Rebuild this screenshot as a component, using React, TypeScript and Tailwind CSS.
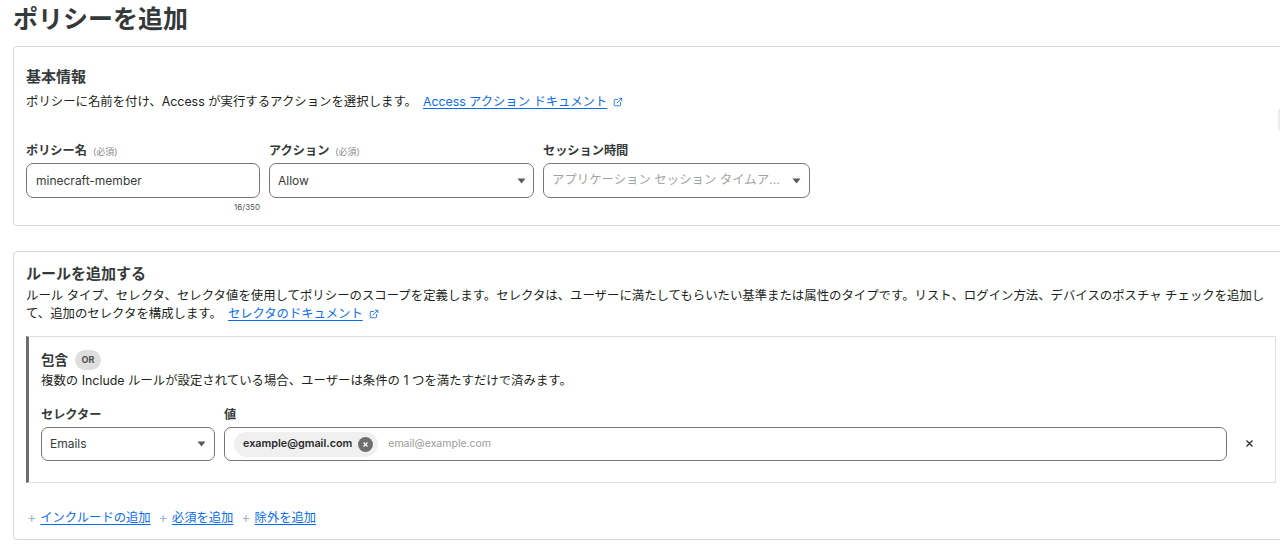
import { ExternalLink } from "lucide-react";

const font = "font-['Inter','Noto_Sans_CJK_JP',sans-serif]";

function Caret() {
  return (
    <svg width="9" height="6" viewBox="0 0 9 6" className="shrink-0">
      <path d="M0.5 0.5h8L4.5 5.5z" fill="#595959" />
    </svg>
  );
}

function Required() {
  return <span className="ml-[6px] text-[9px] font-normal text-[#8a8a8a]">(必須)</span>;
}

function DocLink({ children }: { children: string }) {
  return (
    <span className="inline-flex items-center gap-[6px] text-[12.3px] text-[#0a6cf0]">
      <span className="underline underline-offset-2">{children}</span>
      <ExternalLink className="h-[10px] w-[10px]" strokeWidth={2} />
    </span>
  );
}

function Field({ label, children, required, className }: { label: string; children: React.ReactNode; required?: boolean; className: string }) {
  return (
    <div className={className}>
      <div className="mb-[3px] h-[18px] text-[12.2px] font-semibold leading-[18px] text-[#36393a]">
        {label}
        {required && <Required />}
      </div>
      {children}
    </div>
  );
}

const boxClass = "flex items-center rounded-[7px] border border-[#72777a] bg-white text-[#36393a]";

function AddLink({ children }: { children: string }) {
  return (
    <span>
      <span className="mr-[4px] text-[14px] text-[#9db5d3]">+</span>
      <span className="underline underline-offset-2">{children}</span>
    </span>
  );
}

export default function App() {
  return (
    <div className={`${font} relative h-[544px] w-[1280px] overflow-hidden bg-white text-[#1d1f20]`}>
      <h1 className="ml-[13px] pt-[3px] text-[25px] font-semibold leading-[32px] text-[#36393a]">ポリシーを追加</h1>

      <section className="ml-[13px] mt-[11px] h-[180px] w-[1300px] rounded-[4px] border border-[#d9d9d9] px-[12px] pt-[19px]">
        <h2 className="text-[15px] font-semibold leading-[22px] text-[#36393a]">基本情報</h2>
        <div className="mt-[4px] flex items-center text-[12.4px] leading-[20px]">
          <p>ポリシーに名前を付け、Access が実行するアクションを選択します。</p>
          <span className="ml-[6px]"><DocLink>Access アクション ドキュメント</DocLink></span>
        </div>
        <div className="mt-[30px] flex gap-[9px]">
          <Field label="ポリシー名" required className="w-[234px]">
            <div className={`${boxClass} h-[35px] px-[9px] text-[12px]`}>minecraft-member</div>
            <div className="mt-[4px] text-right text-[8px] leading-[10px] text-[#555]">16/350</div>
          </Field>
          <Field label="アクション" required className="w-[265px]">
            <div className={`${boxClass} h-[35px] justify-between pl-[8px] pr-[7px] text-[12px]`}>
              Allow
              <Caret />
            </div>
          </Field>
          <Field label="セッション時間" className="w-[267px]">
            <div className={`${boxClass} h-[35px] justify-between pl-[8px] pr-[8px] text-[12.4px] text-[#a3a3a3]`}>
              アプリケーション セッション タイムア...
              <Caret />
            </div>
          </Field>
        </div>
      </section>

      <section className="ml-[13px] mt-[25px] h-[289px] w-[1300px] rounded-[4px] border border-[#d9d9d9] pl-[12px] pt-[11px]">
        <h2 className="text-[15px] font-semibold leading-[22px] text-[#36393a]">ルールを追加する</h2>
        <div className="mt-[2px] w-[1242px] text-[12.4px] leading-[18px]">
          <p className="whitespace-nowrap">ルール タイプ、セレクタ、セレクタ値を使用してポリシーのスコープを定義します。セレクタは、ユーザーに満たしてもらいたい基準または属性のタイプです。リスト、ログイン方法、デバイスのポスチャ チェックを追加し</p>
          <div className="flex items-center">
            <p>て、追加のセレクタを構成します。</p>
            <span className="ml-[6px]"><DocLink>セレクタのドキュメント</DocLink></span>
          </div>
        </div>

        <div className="mt-[13px] h-[147px] w-[1250px] border border-l-[3px] border-[#dedede] border-l-[#6e6e6e] pl-[12px] pt-[13px]">
          <div className="flex items-center gap-[7px]">
            <span className="text-[13.5px] font-semibold leading-[20px] text-[#36393a]">包含</span>
            <span className="flex h-[20px] w-[26px] items-center justify-center rounded-full bg-[#dedede] text-[9px] font-bold text-[#4d4d4d]">OR</span>
          </div>
          <p className="mt-[1px] text-[12.4px] leading-[19px]">複数の Include ルールが設定されている場合、ユーザーは条件の 1 つを満たすだけで済みます。</p>
          <div className="mt-[16px] flex items-start">
            <Field label="セレクター" className="w-[174px]">
              <div className={`${boxClass} h-[34px] justify-between pl-[8px] pr-[8px] text-[12px]`}>
                Emails
                <Caret />
              </div>
            </Field>
            <Field label="値" className="ml-[9px] w-[1003px]">
              <div className={`${boxClass} h-[34px] pl-[9px]`}>
                <span className="flex h-[25px] items-center rounded-full bg-[#f0f0f0] pl-[9px] pr-[5px] text-[10.8px] font-semibold text-[#2b2b2b]">
                  example@gmail.com
                  <span className="ml-[6px] flex h-[15px] w-[15px] items-center justify-center rounded-full bg-[#6e6e6e]">
                    <svg width="7" height="7" viewBox="0 0 7 7">
                      <path d="M1.5 1.5l4 4M5.5 1.5l-4 4" stroke="#fff" strokeWidth="1.2" />
                    </svg>
                  </span>
                </span>
                <span className="ml-[10px] text-[10.5px] text-[#9a9a9a]">email@example.com</span>
              </div>
            </Field>
            <svg width="7" height="7" viewBox="0 0 7 7" className="ml-[19px] mt-[34px]">
              <path d="M0.5 0.5l6 6M6.5 0.5l-6 6" stroke="#333" strokeWidth="1.3" />
            </svg>
          </div>
        </div>

        <div className="ml-[1px] mt-[25px] flex items-center gap-[8px] text-[12.3px] leading-[18px] text-[#0a6cf0]">
          <AddLink>インクルードの追加</AddLink>
          <AddLink>必須を追加</AddLink>
          <AddLink>除外を追加</AddLink>
        </div>
      </section>

      {/* scroll handle peeking in from the right edge */}
      <div className="absolute right-[-6px] top-[108px] h-[24px] w-[8px] rounded-full bg-[#ececec]" />
    </div>
  );
}
